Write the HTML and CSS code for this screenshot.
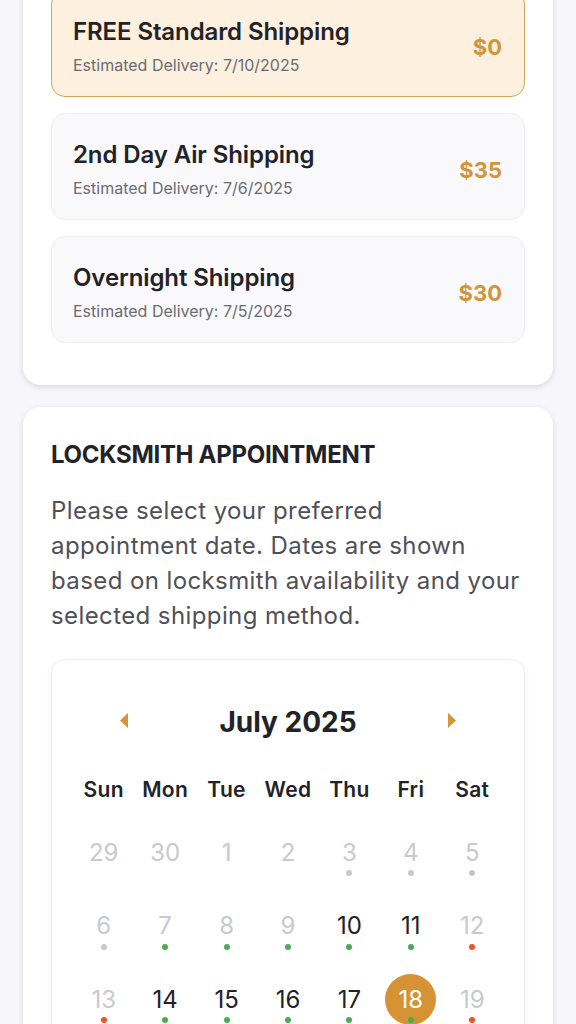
FILE: index.html
```html
<!DOCTYPE html>
<html lang="en">
<head>
    <meta charset="UTF-8">
    <meta name="viewport" content="width=device-width, initial-scale=1.0">
    <title>Checkout - Shipping &amp; Appointment</title>
    <link rel="stylesheet" href="styles.css">
</head>
<body>
    <section class="panel shipping-panel">
        <div class="ship-option selected">
            <div class="ship-info">
                <div class="ship-title">FREE Standard Shipping</div>
                <div class="ship-date">Estimated Delivery: 7/10/2025</div>
            </div>
            <div class="ship-price">$0</div>
        </div>
        <div class="ship-option">
            <div class="ship-info">
                <div class="ship-title">2nd Day Air Shipping</div>
                <div class="ship-date">Estimated Delivery: 7/6/2025</div>
            </div>
            <div class="ship-price">$35</div>
        </div>
        <div class="ship-option">
            <div class="ship-info">
                <div class="ship-title">Overnight Shipping</div>
                <div class="ship-date">Estimated Delivery: 7/5/2025</div>
            </div>
            <div class="ship-price">$30</div>
        </div>
    </section>

    <section class="panel appointment-panel">
        <h2 class="panel-heading">LOCKSMITH APPOINTMENT</h2>
        <p class="panel-text">Please select your preferred<br>appointment date. Dates are shown<br>based on locksmith availability and your<br>selected shipping method.</p>

        <div class="calendar">
            <div class="cal-header">
                <button class="cal-nav" aria-label="Previous month">
                    <svg width="8" height="15" viewBox="0 0 8 15"><polygon points="8,0 8,15 0,7.5" fill="#d4943a"/></svg>
                </button>
                <div class="cal-month">July 2025</div>
                <button class="cal-nav" aria-label="Next month">
                    <svg width="8" height="15" viewBox="0 0 8 15"><polygon points="0,0 0,15 8,7.5" fill="#d4943a"/></svg>
                </button>
            </div>
            <div class="cal-weekdays">
                <span>Sun</span><span>Mon</span><span>Tue</span><span>Wed</span><span>Thu</span><span>Fri</span><span>Sat</span>
            </div>
            <div class="cal-grid" id="cal-grid"></div>
        </div>
    </section>

    <script>
        // day, state (off = unavailable), dot colour
        const days = [
            [29, 'off', ''], [30, 'off', ''], [1, 'off', ''], [2, 'off', ''], [3, 'off', 'gray'], [4, 'off', 'gray'], [5, 'off', 'gray'],
            [6, 'off', 'gray'], [7, 'off', 'green'], [8, 'off', 'green'], [9, 'off', 'green'], [10, 'on', 'green'], [11, 'on', 'green'], [12, 'off', 'red'],
            [13, 'off', 'red'], [14, 'on', 'green'], [15, 'on', 'green'], [16, 'on', 'green'], [17, 'on', 'green'], [18, 'selected', 'green'], [19, 'off', 'red']
        ];

        const grid = document.getElementById('cal-grid');
        days.forEach(([num, state, dot]) => {
            const cell = document.createElement('div');
            cell.className = 'cal-day';
            cell.innerHTML = `
                <span class="day-num ${state}">
                    ${num}
                    ${dot ? `<span class="dot ${dot}"></span>` : ''}
                </span>
            `;
            grid.appendChild(cell);
        });
    </script>
</body>
</html>
```

FILE: styles.css
```css
body {
    margin: 0;
    padding: 0 23px 40px;
    background-color: #f7f7fb;
    font-family: 'Inter', 'Liberation Sans', sans-serif;
    color: #222228;
}

.panel {
    background-color: #fff;
    border-radius: 18px;
    box-shadow: 0 2px 6px rgba(0, 0, 0, 0.12);
}

.shipping-panel {
    margin-top: -38px;
    padding: 28px 28px 42px;
    display: flex;
    flex-direction: column;
    gap: 16px;
}

.ship-option {
    display: flex;
    align-items: center;
    justify-content: space-between;
    padding: 27px 22px 20px 21px;
    background-color: #f9f9fc;
    border: 1px solid #efeff3;
    border-radius: 14px;
}

.ship-option.selected {
    background-color: #fdf0de;
    border-color: #d6a35a;
}

.ship-title {
    font-size: 24px;
    line-height: 28px;
    font-weight: 600;
    letter-spacing: -0.1px;
}

.ship-date {
    margin-top: 8px;
    font-size: 16px;
    line-height: 22px;
    color: #6b6b73;
}

.ship-price {
    font-size: 22px;
    font-weight: 700;
    color: #d4943a;
}

.appointment-panel {
    margin-top: 22px;
    padding: 34px 28px 30px;
}

.panel-heading {
    margin: 0;
    font-size: 24px;
    line-height: 28px;
    font-weight: 700;
    letter-spacing: -0.3px;
}

.panel-text {
    margin: 24px 0 26px;
    font-size: 24px;
    line-height: 35px;
    letter-spacing: 0.4px;
    color: #505058;
    white-space: nowrap;
}

.calendar {
    background-color: #fff;
    border: 1px solid #f0f0f3;
    border-radius: 14px;
    box-shadow: 0 2px 6px rgba(0, 0, 0, 0.06);
    padding: 40px 21px 30px;
}

.cal-header {
    display: flex;
    align-items: center;
    justify-content: space-between;
    padding: 0 47px;
    height: 44px;
}

.cal-nav {
    background: none;
    border: none;
    padding: 0 0 3px;
    display: flex;
    cursor: pointer;
}

.cal-month {
    font-size: 28px;
    font-weight: 700;
}

.cal-weekdays {
    display: grid;
    grid-template-columns: repeat(7, 1fr);
    margin-top: 34px;
    text-align: center;
    font-size: 21px;
    line-height: 24px;
    font-weight: 600;
    letter-spacing: 0.3px;
}

.cal-grid {
    display: grid;
    grid-template-columns: repeat(7, 1fr);
    row-gap: 22.5px;
    margin-top: 24.5px;
}

.cal-day {
    display: flex;
    justify-content: center;
}

.day-num {
    position: relative;
    width: 51px;
    height: 51px;
    border-radius: 50%;
    display: flex;
    align-items: center;
    justify-content: center;
    font-size: 24px;
    color: #222228;
}

.day-num.off {
    color: #c9c9cf;
}

.day-num.selected {
    background-color: #d59335;
    color: #fff;
}

.dot {
    position: absolute;
    left: 22.5px;
    bottom: 1.5px;
    width: 6px;
    height: 6px;
    border-radius: 50%;
}

.dot.gray {
    background-color: #c8c8cc;
}

.dot.green {
    background-color: #4caa50;
}

.dot.red {
    background-color: #f0502e;
}
```
